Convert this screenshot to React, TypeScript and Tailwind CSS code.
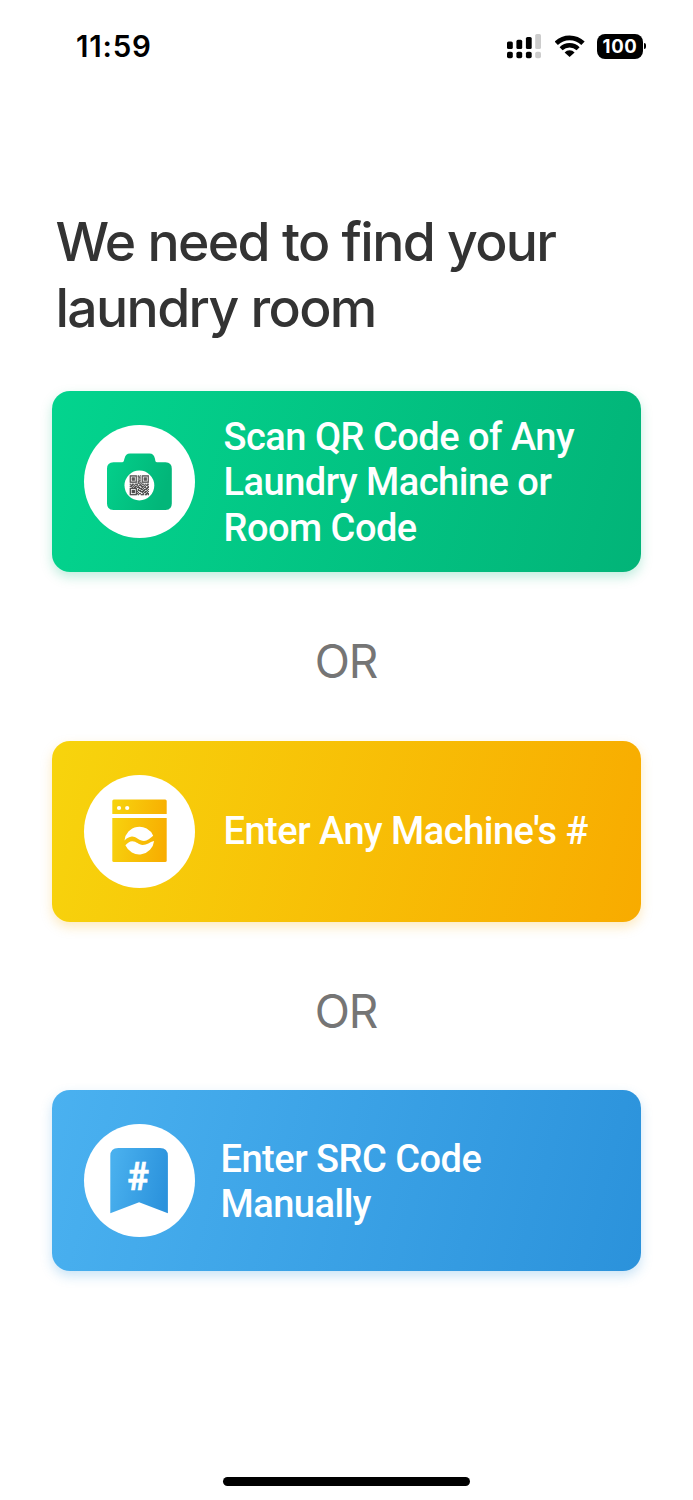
import type { ReactNode } from "react";

function SignalIcon() {
  return (
    <svg width="34" height="25" viewBox="0 0 34 25">
      <rect x="0" y="7.4" width="5.8" height="7.6" rx="1.6" />
      <rect x="9.4" y="5.8" width="5.8" height="9.2" rx="1.6" />
      <rect x="18.9" y="3" width="5.8" height="12" rx="1.6" />
      <rect x="28.2" y="0" width="5.8" height="15" rx="1.6" fill="#cccccc" />
      <rect x="0" y="17.7" width="5.8" height="6.6" rx="1.8" />
      <rect x="9.4" y="17.7" width="5.8" height="6.6" rx="1.8" />
      <rect x="18.9" y="17.7" width="5.8" height="6.6" rx="1.8" />
      <rect x="28.2" y="17.7" width="5.8" height="6.6" rx="1.8" fill="#cccccc" />
    </svg>
  );
}

function WifiIcon() {
  return (
    <svg width="30" height="22" viewBox="0 0 30 22">
      <path d="M1.2 8.3A19.2 19.2 0 0 1 28 8.3" fill="none" stroke="#000" strokeWidth="4.8" />
      <path d="M6.1 13.7A12.2 12.2 0 0 1 23.1 13.7" fill="none" stroke="#000" strokeWidth="4.3" />
      <path d="M14.6 22L9.6 17.4A7 7 0 0 1 19.6 17.4Z" />
    </svg>
  );
}

function StatusBar() {
  return (
    <header className="flex h-[92px] items-center justify-between pl-[76px] pr-[47px]">
      <span className="pt-[2px] font-['Inter'] text-[29.5px] font-semibold leading-none tracking-[0.8px]">11:59</span>
      <div className="flex items-center">
        <SignalIcon />
        <div className="ml-[14px]"><WifiIcon /></div>
        <div className="ml-[12px] flex h-[25px] w-[46px] items-center justify-center rounded-[8px] bg-black font-['Inter'] text-[18.5px] font-bold leading-none tracking-[0.7px] text-white">
          100
        </div>
        <span className="ml-[1px] h-[6px] w-[2px] rounded-r-full bg-black" />
      </div>
    </header>
  );
}

// 19x19 modules, dark cells packed row by row
const qrRows = [
  "1111111010101111111",
  "1000001011001000001",
  "1011101001101011101",
  "1011101010001011101",
  "1011101001101011101",
  "1000001011001000001",
  "1111111010101111111",
  "0000000011010000000",
  "1011011100101101011",
  "0110100101110010110",
  "1101011010011101001",
  "0010110111001011011",
  "1111111001110100110",
  "1000001010011011101",
  "1011101011100110010",
  "1011101100111101101",
  "1011101010001011010",
  "1000001101100100111",
  "1111111010011101101",
];

function CameraIcon() {
  return (
    <svg width="111" height="113" viewBox="0.5 0 111 113">
      <defs>
        <linearGradient id="camera" x1="0" y1="0" x2="1" y2="0.25">
          <stop offset="0" stopColor="#03d08b" />
          <stop offset="1" stopColor="#02b679" />
        </linearGradient>
      </defs>
      <path
        d="M30 37.3H38C40.5 37.3 40.3 35.8 41 33.5C41.9 30.2 43.4 28.5 46.5 28.5H66C69 28.5 70.6 30.2 71.4 33.5C72 35.8 71.5 37.3 74.5 37.3H82Q88.3 37.3 88.3 43.8V78.5Q88.3 85 82 85H30Q23.5 85 23.5 78.5V43.8Q23.5 37.3 30 37.3Z"
        fill="url(#camera)"
      />
      <circle cx="55.9" cy="60.5" r="14.9" fill="#fff" />
      <g transform="translate(46.2 50.3)" fill="#444">
        {qrRows.map((row, y) =>
          row.split("").map((cell, x) => (cell === "1" ? <rect key={`${x}-${y}`} x={x} y={y * 1.04} width="1.2" height="1.25" /> : null)),
        )}
      </g>
    </svg>
  );
}

function WasherIcon() {
  return (
    <svg width="111" height="113" viewBox="0.5 0 111 113">
      <defs>
        <linearGradient id="washer" gradientUnits="userSpaceOnUse" x1="28" y1="50" x2="84" y2="58">
          <stop offset="0" stopColor="#f7d20e" />
          <stop offset="1" stopColor="#f8ad01" />
        </linearGradient>
      </defs>
      <path d="M30.3 24.5H81.7Q83.2 24.5 83.2 26V39H28.8V26Q28.8 24.5 30.3 24.5Z" fill="url(#washer)" />
      <path d="M28.8 43H83.2V85.5Q83.2 87 81.7 87H30.3Q28.8 87 28.8 85.5Z" fill="url(#washer)" />
      <circle cx="35.5" cy="33" r="2.1" fill="#fff" />
      <circle cx="43.7" cy="33" r="2.1" fill="#fff" />
      <path d="M41 65.4A15 15 0 0 1 69.7 60.7C66.5 63.5 63 66.7 58.8 65.8C54.5 64.8 52 61.3 48.3 61.6C45.5 61.9 43.5 63.3 41 65.4Z" fill="#fff" />
      <path d="M41.9 70.3C44 67.8 46 66.3 48.8 66.2C53 66.2 55 69.8 59.2 70C63.5 70 66 67.1 70.6 66A15 15 0 0 1 41.9 70.3Z" fill="#fff" />
    </svg>
  );
}

function BookmarkIcon() {
  return (
    <svg width="111" height="113" viewBox="0.5 0 111 113">
      <defs>
        <linearGradient id="bookmark" gradientUnits="userSpaceOnUse" x1="27" y1="48" x2="85" y2="60">
          <stop offset="0" stopColor="#49b0ee" />
          <stop offset="1" stopColor="#2b92dc" />
        </linearGradient>
      </defs>
      <path d="M34.8 24H76.4Q84.4 24 84.4 32V89.3L55.6 78.2L26.8 89.3V32Q26.8 24 34.8 24Z" fill="url(#bookmark)" />
      <text transform="translate(54.6 66.2) scale(0.93 1)" textAnchor="middle" fill="#fff" stroke="#fff" strokeWidth="0.6" className="font-['Roboto'] text-[39px] font-bold">
        #
      </text>
    </svg>
  );
}

function OptionCard({ className, icon, children }: { className: string; icon: ReactNode; children: ReactNode }) {
  return (
    <button
      className={`flex h-[181px] w-full items-center rounded-[18px] pl-[32px] text-left font-['Roboto'] text-[38px] font-medium leading-[45.2px] tracking-[-0.5px] text-white ${className}`}
    >
      <span className="h-[113px] w-[111px] shrink-0 rounded-[50%] bg-white">{icon}</span>
      {children}
    </button>
  );
}

function Divider({ className }: { className: string }) {
  return <div className={`flex items-center justify-center pr-[1px] font-['Inter'] text-[46px] leading-none tracking-[-1.2px] text-[#757575] ${className}`}>OR</div>;
}

export default function App() {
  return (
    <div className="flex h-[1500px] w-[693px] flex-col bg-white text-black">
      <StatusBar />
      <main className="px-[52px] pt-[117px]">
        <h1 className="h-[182px] pl-[3.5px] font-['Inter'] text-[53.5px] font-medium leading-[66px] tracking-[-1.65px] text-[#333333] [word-spacing:0.3px]">
          We need to find your
          <br />
          laundry room
        </h1>
        <OptionCard className="bg-[linear-gradient(105deg,#03d48e,#02b478)] shadow-[0_5px_12px_rgba(2,184,122,0.25)]" icon={<CameraIcon />}>
          <span className="ml-[28.5px] mt-[3px] whitespace-nowrap">
            Scan QR Code of Any
            <br />
            Laundry Machine or
            <br />
            Room Code
          </span>
        </OptionCard>
        <Divider className="h-[169px] pt-[8px]" />
        <OptionCard className="bg-[linear-gradient(105deg,#f7d40d,#f8ab00)] shadow-[0_5px_12px_rgba(248,173,1,0.25)]" icon={<WasherIcon />}>
          <span className="ml-[28.5px] whitespace-nowrap">Enter Any Machine's #</span>
        </OptionCard>
        <Divider className="h-[168px] pt-[10px]" />
        <OptionCard className="bg-[linear-gradient(105deg,#4ab1f0,#2b92db)] shadow-[0_5px_12px_rgba(43,146,219,0.25)]" icon={<BookmarkIcon />}>
          <span className="ml-[25.5px] mt-[3px] whitespace-nowrap">
            Enter SRC Code
            <br />
            Manually
          </span>
        </OptionCard>
      </main>
      <div className="mx-auto mb-[14px] mt-auto h-[9px] w-[247px] rounded-full bg-black" />
    </div>
  );
}
